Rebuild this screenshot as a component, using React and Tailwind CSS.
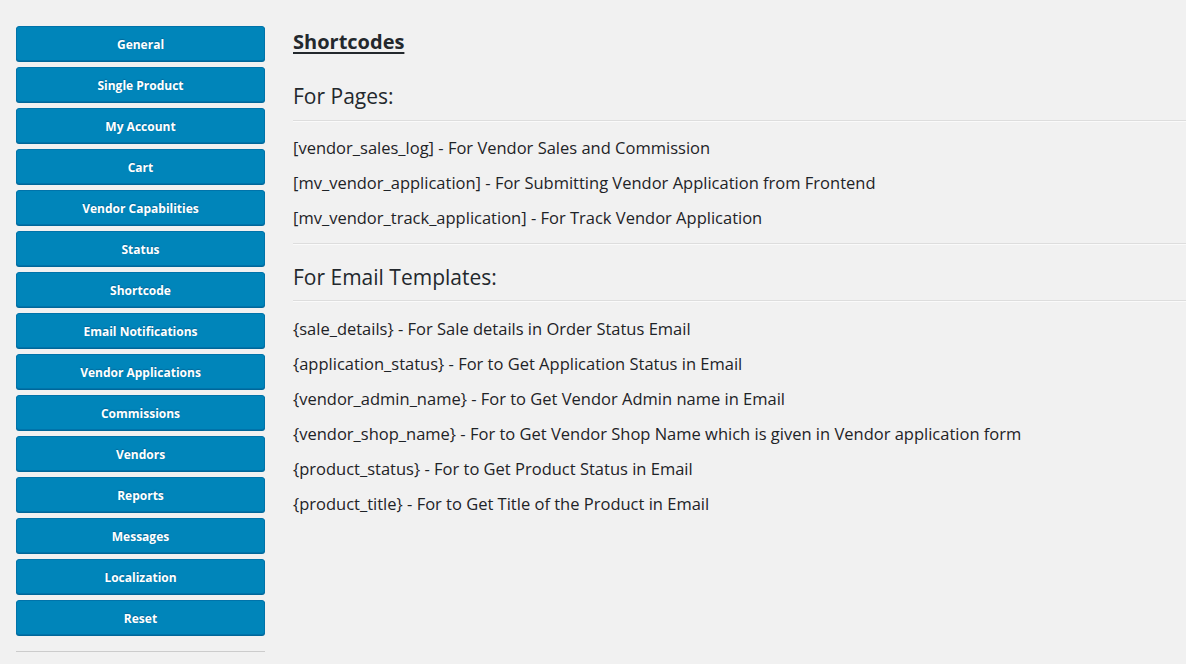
import React from 'react';

const tabs = [
  'General',
  'Single Product',
  'My Account',
  'Cart',
  'Vendor Capabilities',
  'Status',
  'Shortcode',
  'Email Notifications',
  'Vendor Applications',
  'Commissions',
  'Vendors',
  'Reports',
  'Messages',
  'Localization',
  'Reset',
];

const pageCodes = [
  ['[vendor_sales_log]', 'For Vendor Sales and Commission'],
  ['[mv_vendor_application]', 'For Submitting Vendor Application from Frontend'],
  ['[mv_vendor_track_application]', 'For Track Vendor Application'],
];

const emailCodes = [
  ['{sale_details}', 'For Sale details in Order Status Email'],
  ['{application_status}', 'For to Get Application Status in Email'],
  ['{vendor_admin_name}', 'For to Get Vendor Admin name in Email'],
  ['{vendor_shop_name}', 'For to Get Vendor Shop Name which is given in Vendor application form'],
  ['{product_status}', 'For to Get Product Status in Email'],
  ['{product_title}', 'For to Get Title of the Product in Email'],
];

function CodeRow({ code, desc }) {
  return (
    <div className="h-[35px] flex items-center text-[16.5px] text-[#1e2327]">
      <span>{code}</span>
      <span>&nbsp;- {desc}</span>
    </div>
  );
}

function Rule() {
  return <div className="border-t border-[#dddddd] border-b border-b-[#fafafa]" />;
}

export default function App() {
  return (
    <div
      className="min-h-screen w-[1186px] h-[664px] overflow-hidden bg-[#f1f1f1] flex"
      style={{ fontFamily: '"Open Sans", "Noto Sans", sans-serif' }}
    >
      {/* Tab buttons */}
      <div className="w-[249px] ml-4 pt-[26px] flex flex-col shrink-0">
        <div className="flex flex-col gap-[6px]">
          {tabs.map((t) => (
            <button
              key={t}
              className="h-[35px] w-full pt-[3px] rounded-[3px] bg-[#0085ba] border border-[#0073aa] shadow-[0_1px_0_#006799] text-white text-[12px] font-bold [text-shadow:0_-1px_1px_#006799]"
            >
              {t}
            </button>
          ))}
        </div>
        <div className="mt-[16px] border-t border-[#cccccc]" />
      </div>

      {/* Content */}
      <div className="flex-1 ml-[28px] pt-[28px]">
        <h2 className="text-[20px] font-bold underline text-[#23282d] leading-[28px] underline-offset-[3px]">
          Shortcodes
        </h2>

        <h3 className="mt-[25px] text-[21px] text-[#23282d] leading-[30px]">For Pages:</h3>
        <div className="mt-[9px]">
          <Rule />
        </div>
        <div className="pt-[9px] pb-[7px]">
          {pageCodes.map(([c, d]) => (
            <CodeRow key={c} code={c} desc={d} />
          ))}
        </div>
        <Rule />

        <h3 className="mt-[17px] text-[21px] text-[#23282d] leading-[30px]">For Email Templates:</h3>
        <div className="mt-[8px]">
          <Rule />
        </div>
        <div className="pt-[10px]">
          {emailCodes.map(([c, d]) => (
            <CodeRow key={c} code={c} desc={d} />
          ))}
        </div>
      </div>
    </div>
  );
}
